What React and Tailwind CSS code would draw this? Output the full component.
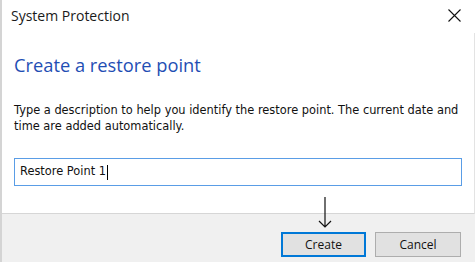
import React from 'react';

const App = () => {
    return (
        <div className="relative w-[475px] h-[262px] bg-white border-l-2 border-[#d4d4d4] flex flex-col overflow-hidden">
            {/* Title bar */}
            <div className="h-[33px] flex items-start justify-between shrink-0">
                <span className="pl-[9px] pt-[7px] text-[14px] leading-[18px] text-[#1a1a1a] font-['Open_Sans',sans-serif]">
                    System Protection
                </span>
                <svg className="mt-[9px] mr-[14px]" width="13" height="13" viewBox="0 0 13 13">
                    <path d="M0.5 0.5 L12.5 12.5 M12.5 0.5 L0.5 12.5" stroke="#111" strokeWidth="1.1" />
                </svg>
            </div>

            {/* Body */}
            <div className="flex-1 flex flex-col pl-[12px] pr-[11px] border-r border-[#e3e3e3] border-b border-b-[#d6d6d6]">
                <h1 className="mt-[18px] text-[18.3px] leading-[28px] text-[#1f4eb4] font-['Open_Sans',sans-serif]">
                    Create a restore point
                </h1>
                <p className="mt-[23px] text-[11.4px] leading-[16px] text-[#111] font-['DejaVu_Sans',sans-serif]">
                    Type a description to help you identify the restore point. The current date and time are added automatically.
                </p>
                <div className="mt-[24px] h-[28px] w-[448px] border border-[#5a9de6] flex items-center pl-[5px] text-[11.4px] text-[#111] font-['DejaVu_Sans',sans-serif]">
                    Restore Point 1
                    <span className="w-px h-[15px] bg-black ml-px" />
                </div>
            </div>

            {/* Footer */}
            <div className="h-[48px] bg-[#f0f0f0] flex items-start justify-end pr-[14px] pt-[18px] gap-[9px] shrink-0">
                <button className="w-[85px] h-[25px] bg-[#e1e1e1] border-2 border-[#0078d7] text-[12px] text-[#111] font-['Open_Sans',sans-serif]">
                    Create
                </button>
                <button className="w-[86px] h-[25px] bg-[#e1e1e1] border border-[#adadad] text-[12px] text-[#111] font-['Open_Sans',sans-serif]">
                    Cancel
                </button>
            </div>

            {/* Annotation arrow */}
            <svg className="absolute left-[315px] top-[196px]" width="16" height="32" viewBox="0 0 16 32">
                <path d="M8 1 L8 31 M2 25 L8 31 L14 25" stroke="#111" strokeWidth="1.2" fill="none" />
            </svg>
        </div>
    );
};

export default App;
